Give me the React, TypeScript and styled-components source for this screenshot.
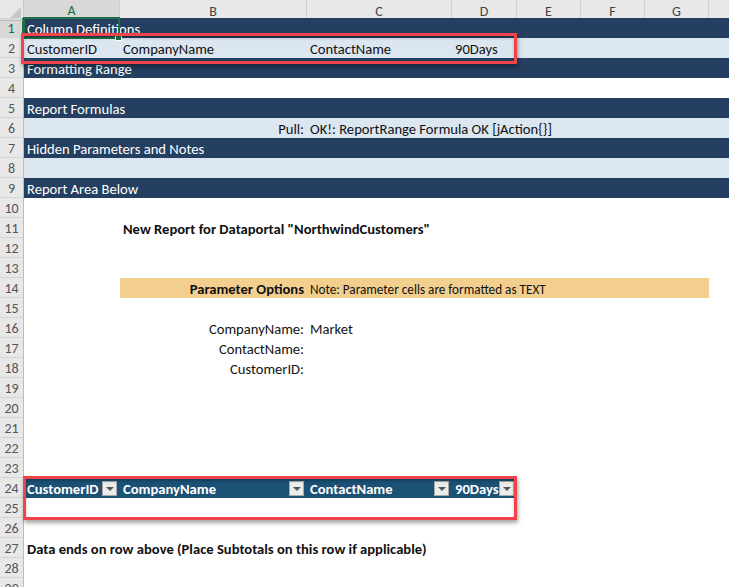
import React from 'react';
import styled, { createGlobalStyle } from 'styled-components';

const COLS = '24px 96px 187px 145px 65px 64px 64px 64px 64px';
const FONT = `Carlito, Calibri, Lato, "Liberation Sans", sans-serif`;

const Global = createGlobalStyle`
  html, body { margin: 0; padding: 0; background: #fff; overflow: hidden; }
  body { font-family: ${FONT}; }
`;

const Sheet = styled.div`
  position: relative;
  width: 729px;
  height: 587px;
  overflow: hidden;
  display: flex;
  flex-direction: column;
  background: #fff;
`;

const HeaderRow = styled.div`
  display: grid;
  grid-template-columns: ${COLS};
  height: 18px;
  flex: none;
  background: #e8e8e8;
`;

const Corner = styled.div`
  position: relative;
  border-right: 1px solid #c8c8c8;
  border-bottom: 1px solid #bcbcbc;
  box-sizing: border-box;
  overflow: hidden;
  &::after {
    content: '';
    position: absolute;
    right: 2px;
    bottom: 2px;
    width: 0;
    height: 0;
    border-left: 11px solid transparent;
    border-bottom: 11px solid #c6c6c6;
  }
`;

const ColHead = styled.div<{ $active?: boolean }>`
  box-sizing: border-box;
  display: flex;
  align-items: center;
  justify-content: center;
  padding-top: 2px;
  font-size: 14px;
  color: ${(p) => (p.$active ? '#1e7145' : '#444')};
  background: ${(p) => (p.$active ? '#d8d8d8' : '#e8e8e8')};
  border-right: 1px solid #d0d0d0;
  border-bottom: ${(p) => (p.$active ? '2px solid #1e7145' : '1px solid #bcbcbc')};
`;

const Row = styled.div`
  display: grid;
  grid-template-columns: ${COLS};
  grid-template-rows: 20px;
  height: 20px;
  flex: none;
`;

const RowNum = styled.div<{ $active?: boolean }>`
  grid-column: 1;
  grid-row: 1;
  box-sizing: border-box;
  display: flex;
  align-items: center;
  justify-content: center;
  padding-top: 1px;
  font-size: 14px;
  color: ${(p) => (p.$active ? '#1e7145' : '#555')};
  background: ${(p) => (p.$active ? '#d8d8d8' : '#e8e8e8')};
  border-right: ${(p) => (p.$active ? '2px solid #1e7145' : '1px solid #bcbcbc')};
  border-bottom: 1px solid #d4d4d4;
`;

type Tone = 'dark' | 'light' | 'orange' | 'table';
const toneBg: Record<Tone, string> = {
  dark: '#243f60',
  light: '#dce6f1',
  orange: '#f3cf8f',
  table: '#1b5175',
};

const Fill = styled.div<{ $tone: Tone; $from: number; $to: number }>`
  grid-row: 1;
  grid-column: ${(p) => `${p.$from} / ${p.$to}`};
  background: ${(p) => toneBg[p.$tone]};
`;

const Cell = styled.div<{
  $col: number;
  $span?: number;
  $align?: 'left' | 'right';
  $bold?: boolean;
  $color?: string;
  $size?: number;
}>`
  grid-row: 1;
  grid-column: ${(p) => `${p.$col} / span ${p.$span ?? 1}`};
  display: flex;
  align-items: center;
  justify-content: ${(p) => (p.$align === 'right' ? 'flex-end' : 'flex-start')};
  padding: ${(p) => (p.$align === 'right' ? '2px 3px 0 0' : '2px 0 0 3px')};
  white-space: nowrap;
  overflow: visible;
  min-width: 0;
  font-size: ${(p) => p.$size ?? 14.6}px;
  font-weight: ${(p) => (p.$bold ? 700 : 400)};
  color: ${(p) => p.$color ?? '#111'};
  z-index: 1;
`;

const NoteText = styled.span`
  font-size: 13.2px;
  font-weight: 400;
`;

const TableHead = styled.div<{ $col: number }>`
  grid-row: 1;
  grid-column: ${(p) => p.$col};
  display: flex;
  align-items: center;
  justify-content: space-between;
  padding: 0 3px 0 3px;
  color: #fff;
  font-size: 14.6px;
  font-weight: 700;
  white-space: nowrap;
  z-index: 1;
`;

const HeadLabel = styled.span`
  padding-top: 2px;
`;

const FilterButton = styled.span`
  flex: none;
  box-sizing: border-box;
  width: 15px;
  height: 15px;
  background: #ececec;
  border: 1px solid #a9a9a9;
  display: flex;
  align-items: center;
  justify-content: center;
  &::after {
    content: '';
    width: 0;
    height: 0;
    border-left: 4px solid transparent;
    border-right: 4px solid transparent;
    border-top: 4px solid #555;
    margin-top: 1px;
  }
`;

const Selection = styled.div`
  position: absolute;
  left: 23px;
  top: 17px;
  width: 97px;
  height: 22px;
  box-sizing: border-box;
  border: 2px solid #1e7145;
  z-index: 2;
  &::after {
    content: '';
    position: absolute;
    right: -4px;
    bottom: -4px;
    width: 5px;
    height: 5px;
    background: #1e7145;
    border: 1px solid #fff;
  }
`;

const Callout = styled.div<{ $x: number; $y: number; $w: number; $h: number }>`
  position: absolute;
  left: ${(p) => p.$x}px;
  top: ${(p) => p.$y}px;
  width: ${(p) => p.$w}px;
  height: ${(p) => p.$h}px;
  box-sizing: border-box;
  border: 3px solid #f0434a;
  box-shadow: 1px 3px 4px rgba(0, 0, 0, 0.35), inset 0 2px 3px rgba(0, 0, 0, 0.25);
  z-index: 3;
  pointer-events: none;
`;

const letters = ['A', 'B', 'C', 'D', 'E', 'F', 'G', ''];

type RowSpec = {
  n: number;
  tone?: Tone;
  content?: React.ReactNode;
};

const WHITE = '#fff';

const rows: RowSpec[] = [
  { n: 1, tone: 'dark', content: <Cell $col={2} $span={8} $color={WHITE}>Column Definitions</Cell> },
  {
    n: 2,
    tone: 'light',
    content: (
      <>
        <Cell $col={2}>CustomerID</Cell>
        <Cell $col={3}>CompanyName</Cell>
        <Cell $col={4}>ContactName</Cell>
        <Cell $col={5}>90Days</Cell>
      </>
    ),
  },
  { n: 3, tone: 'dark', content: <Cell $col={2} $span={8} $color={WHITE}>Formatting Range</Cell> },
  { n: 4 },
  { n: 5, tone: 'dark', content: <Cell $col={2} $span={8} $color={WHITE}>Report Formulas</Cell> },
  {
    n: 6,
    tone: 'light',
    content: (
      <>
        <Cell $col={3} $align="right">Pull:</Cell>
        <Cell $col={4} $span={6}>OK!: ReportRange Formula OK [jAction{'{}'}]</Cell>
      </>
    ),
  },
  { n: 7, tone: 'dark', content: <Cell $col={2} $span={8} $color={WHITE}>Hidden Parameters and Notes</Cell> },
  { n: 8, tone: 'light' },
  { n: 9, tone: 'dark', content: <Cell $col={2} $span={8} $color={WHITE}>Report Area Below</Cell> },
  { n: 10 },
  { n: 11, content: <Cell $col={3} $span={6} $bold>New Report for Dataportal "NorthwindCustomers"</Cell> },
  { n: 12 },
  { n: 13 },
  {
    n: 14,
    content: (
      <>
        <Fill $tone="orange" $from={3} $to={9} />
        <Cell $col={3} $align="right" $bold>Parameter Options</Cell>
        <Cell $col={4} $span={5}><NoteText>Note: Parameter cells are formatted as TEXT</NoteText></Cell>
      </>
    ),
  },
  { n: 15 },
  {
    n: 16,
    content: (
      <>
        <Cell $col={3} $align="right">CompanyName:</Cell>
        <Cell $col={4}>Market</Cell>
      </>
    ),
  },
  { n: 17, content: <Cell $col={3} $align="right">ContactName:</Cell> },
  { n: 18, content: <Cell $col={3} $align="right">CustomerID:</Cell> },
  { n: 19 },
  { n: 20 },
  { n: 21 },
  { n: 22 },
  { n: 23 },
  {
    n: 24,
    content: (
      <>
        <Fill $tone="table" $from={2} $to={6} />
        <TableHead $col={2}><HeadLabel>CustomerID</HeadLabel><FilterButton /></TableHead>
        <TableHead $col={3}><HeadLabel>CompanyName</HeadLabel><FilterButton /></TableHead>
        <TableHead $col={4}><HeadLabel>ContactName</HeadLabel><FilterButton /></TableHead>
        <TableHead $col={5}><HeadLabel>90Days</HeadLabel><FilterButton /></TableHead>
      </>
    ),
  },
  { n: 25 },
  { n: 26 },
  { n: 27, content: <Cell $col={2} $span={8} $bold>Data ends on row above (Place Subtotals on this row if applicable)</Cell> },
  { n: 28 },
  { n: 29 },
];

export default function App() {
  return (
    <>
      <Global />
      <Sheet>
        <HeaderRow>
          <Corner />
          {letters.map((l, i) => (
            <ColHead key={i} $active={l === 'A'}>
              {l}
            </ColHead>
          ))}
        </HeaderRow>
        {rows.map((r) => (
          <Row key={r.n}>
            <RowNum $active={r.n === 1}>{r.n}</RowNum>
            {r.tone && <Fill $tone={r.tone} $from={2} $to={10} />}
            {r.content}
          </Row>
        ))}
        <Selection />
        <Callout $x={21} $y={33} $w={496} $h={31} />
        <Callout $x={23} $y={476} $w={494} $h={44} />
      </Sheet>
    </>
  );
}
